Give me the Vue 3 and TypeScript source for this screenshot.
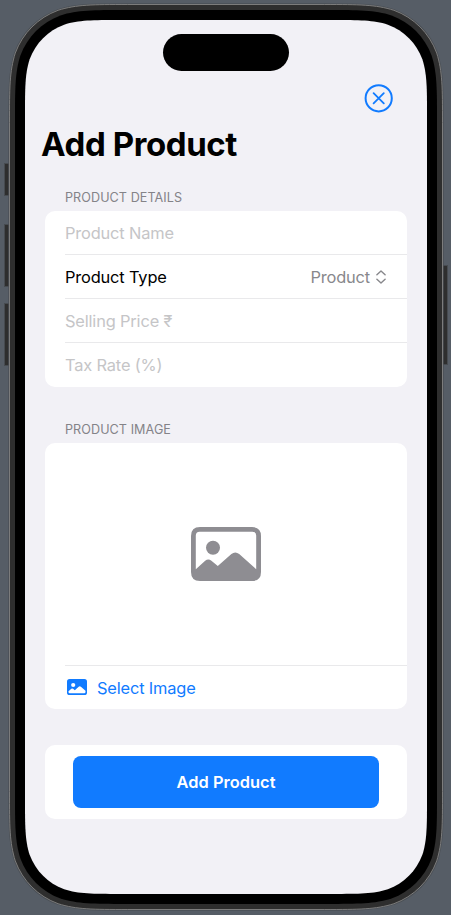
<script setup lang="ts">
import { ref } from 'vue'

interface Field {
  label: string
  kind: 'input' | 'picker'
}

const fields: Field[] = [
  { label: 'Product Name', kind: 'input' },
  { label: 'Product Type', kind: 'picker' },
  { label: 'Selling Price ₹', kind: 'input' },
  { label: 'Tax Rate (%)', kind: 'input' },
]
const productType = ref('Product')

// Rounded rectangle with continuous-curvature corners.
function squircle(x: number, y: number, w: number, h: number, r: number): string {
  const p = (cx: number, cy: number, sx: number, sy: number, a: number, b: number) =>
    `${(cx + sx * a * r).toFixed(2)} ${(cy + sy * b * r).toFixed(2)}`
  const enter = [[1.52866, 0], [1.08849, 0], [0.86841, 0], [0.63149, 0.07491], [0.37282, 0.16906], [0.16906, 0.37282], [0.07491, 0.63149], [0, 0.86841], [0, 1.08849], [0, 1.52866]]
  const corners: [number, number, number, number, boolean][] = [
    [x + w, y, -1, 1, false],
    [x + w, y + h, -1, -1, true],
    [x, y + h, 1, -1, false],
    [x, y, 1, 1, true],
  ]
  let d = ''
  corners.forEach(([cx, cy, sx, sy, flip], i) => {
    const pts = (flip ? [...enter].reverse() : enter).map(([a, b]) => p(cx, cy, sx, sy, a, b))
    d += `${i ? 'L' : 'M'}${pts[0]}C${pts.slice(1).join(' ')}`
  })
  return d + 'Z'
}

const rim = squircle(9.5, 4.5, 433, 905, 77)
const bezel = squircle(15, 10, 422, 894, 72)
const display = squircle(25, 20, 402, 874, 62)
</script>

<template>
  <div class="stage">
    <svg class="device" width="451" height="915" viewBox="0 0 451 915" aria-hidden="true">
      <g fill="#2e2e2e" stroke="#474b50" stroke-width="1">
        <rect x="4.5" y="163.5" width="8" height="32" />
        <rect x="4.5" y="224.5" width="8" height="62" />
        <rect x="4.5" y="303.5" width="8" height="62" />
        <rect x="439.5" y="265.5" width="8" height="99" />
      </g>
      <path :d="rim" fill="none" stroke="#4a4f55" stroke-width="2.4" />
      <path :d="rim" fill="#2e2e2e" stroke="#7c7c7c" stroke-width="1" />
      <path :d="bezel" fill="#000" />
      <path :d="display" fill="#f2f1f6" />
    </svg>

    <main class="screen">
      <div class="island"></div>
      <div class="toolbar">
        <button class="close" aria-label="Close">
          <svg width="30" height="30" viewBox="0 0 30 30" fill="none" stroke="#117bff" stroke-linecap="round">
            <circle cx="14.7" cy="15.3" r="13.1" stroke-width="2" />
            <path d="M9.6 10.2L19.8 20.4M19.8 10.2L9.6 20.4" stroke-width="1.8" />
          </svg>
        </button>
      </div>
      <h1 class="title">Add Product</h1>

      <h2 class="caption">PRODUCT DETAILS</h2>
      <section class="card">
        <div v-for="field in fields" :key="field.label" class="row" :class="field.kind">
          <span>{{ field.label }}</span>
          <span v-if="field.kind === 'picker'" class="value">
            <span>{{ productType }}</span>
            <svg width="10" height="14" viewBox="0 0 10 14" fill="none" stroke="#88888c" stroke-width="1.4" stroke-linecap="round" stroke-linejoin="round">
              <path d="M.9 4.8L5 1L9.1 4.8M.9 9.2L5 13L9.1 9.2" />
            </svg>
          </span>
        </div>
      </section>

      <h2 class="caption second">PRODUCT IMAGE</h2>
      <section class="card">
        <div class="preview">
          <svg width="70" height="54" viewBox="0 0 70 54">
            <path fill="#8e8d92" fill-rule="evenodd" d="M9 0H61Q70 0 70 9V45Q70 54 61 54H9Q0 54 0 45V9Q0 0 9 0ZM8.6 4.8Q4.8 4.8 4.8 8.6V42.2L14.2 33.7Q17.3 31.2 20.4 33.7L26.8 39L40.4 27Q44.3 23.8 48.2 27L65.2 42.2V8.6Q65.2 4.8 61.4 4.8Z" />
            <circle cx="22" cy="20.8" r="7" fill="#8e8d92" />
          </svg>
        </div>
        <div class="row select">
          <svg width="20" height="16" viewBox="0 0 20 16">
            <rect width="20" height="16" rx="2.6" fill="#117bff" />
            <circle cx="6.2" cy="6" r="2.1" fill="#fff" />
            <path fill="#fff" d="M1.5 12.2L4.3 9.8Q5.2 9.1 6.1 9.8L7.8 11.2L11.7 7.8Q12.8 6.9 13.9 7.8L18.5 11.8V13Q18.5 14.3 17.2 14.3H2.8Q1.5 14.3 1.5 13Z" />
          </svg>
          <span>Select Image</span>
        </div>
      </section>

      <section class="card action">
        <button class="submit">Add Product</button>
      </section>
    </main>
  </div>
</template>

<style>
body {
  background: #565d66;
}
</style>

<style scoped>
.stage {
  position: relative;
  width: 451px;
  height: 915px;
  overflow: hidden;
  box-sizing: border-box;
  padding: 20px 24px 21px 25px;
  background: #565d66;
  font-family: Inter, "Liberation Sans", sans-serif;
}
.device {
  position: absolute;
  inset: 0;
}
.screen {
  position: relative;
  display: flex;
  flex-direction: column;
  width: 402px;
  height: 874px;
  box-sizing: border-box;
  padding: 14px 20px 0;
}
.island {
  flex: none;
  align-self: center;
  width: 126px;
  height: 37px;
  border-radius: 19px;
  background: #000;
}
.toolbar {
  display: flex;
  justify-content: flex-end;
  padding: 12px 13px 0 0;
}
button {
  border: 0;
  padding: 0;
  font-family: inherit;
}
.close {
  width: 30px;
  height: 30px;
  background: none;
}
.close svg {
  display: block;
}
.title {
  margin: 11px 0 0 -4px;
  font-size: 33px;
  line-height: 41px;
  font-weight: 700;
  letter-spacing: -0.4px;
}
.caption {
  margin: 25px 0 5px;
  padding-left: 20px;
  font-size: 12.6px;
  line-height: 16px;
  font-weight: 400;
  letter-spacing: 0.07px;
  color: #848388;
}
.caption.second {
  margin-top: 35px;
}
.card {
  flex: none;
  background: #fff;
  border-radius: 10px;
  overflow: hidden;
}
.row {
  display: flex;
  align-items: center;
  justify-content: space-between;
  height: 44px;
  box-sizing: border-box;
  margin-left: 20px;
  padding-right: 21px;
  font-size: 16.4px;
  letter-spacing: -0.16px;
}
.row + .row,
.preview + .row {
  box-shadow: 0 -1px 0 #e9e9eb;
}
.input {
  color: #c5c5c7;
}
.value {
  display: flex;
  align-items: center;
  gap: 6px;
  color: #88888c;
}
.preview {
  display: flex;
  align-items: center;
  justify-content: center;
  box-sizing: border-box;
  height: 223px;
  padding-bottom: 1px;
}
.select {
  height: 43px;
  justify-content: flex-start;
  gap: 10px;
  padding-left: 2px;
  color: #117bff;
}
.select svg {
  margin-bottom: 1px;
}
.action {
  margin-top: 36px;
  padding: 11px 28px;
}
.submit {
  display: block;
  width: 100%;
  height: 52px;
  border-radius: 8px;
  background: #117bff;
  color: #fff;
  font-size: 16.4px;
  font-weight: 570;
  letter-spacing: 0.04px;
}
</style>
